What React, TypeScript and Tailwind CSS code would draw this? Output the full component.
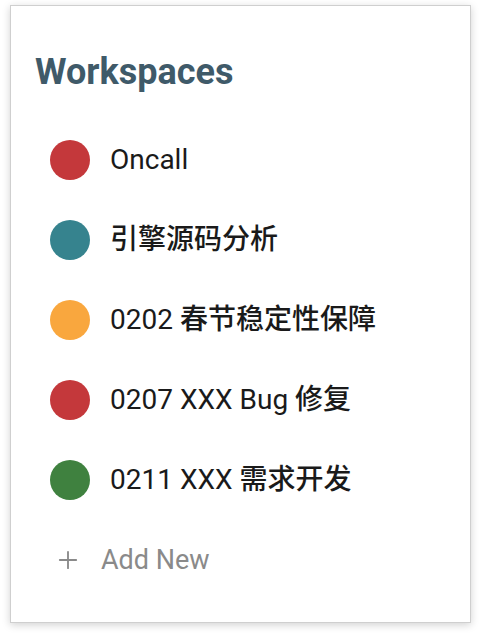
import { Plus } from 'lucide-react';

const workspaces = [
    { name: 'Oncall', color: 'bg-[#c4383b]' },
    { name: '引擎源码分析', color: 'bg-[#36838e]' },
    { name: '0202 春节稳定性保障', color: 'bg-[#f9a73e]' },
    { name: '0207 XXX Bug 修复', color: 'bg-[#c4383b]' },
    { name: '0211 XXX 需求开发', color: 'bg-[#3f813f]' },
];

// CJK glyphs render heavier than the latin ones in the original
function Label({ text }: { text: string }) {
    const parts = text.split(/([\u4e00-\u9fff]+)/).filter(Boolean);
    return (
        <>
            {parts.map((p, i) =>
                /[\u4e00-\u9fff]/.test(p) ? (
                    <span key={i} className="font-medium">{p}</span>
                ) : (
                    <span key={i}>{p}</span>
                )
            )}
        </>
    );
}

export default function App() {
    return (
        <div className="w-[480px] h-[636px] bg-white pt-[5px] pl-[10px]" style={{ fontFamily: 'Roboto, "Noto Sans CJK SC", sans-serif' }}>
            <div className="w-[461px] h-[618px] bg-white border border-[#cfcfcf] shadow-[0_2px_8px_rgba(0,0,0,0.18)]">
                <h1 className="pl-[24px] pt-[46px] text-[36px] leading-[40px] font-bold text-[#3f5a69]">Workspaces</h1>
                <ul className="mt-[28px] flex flex-col">
                    {workspaces.map((w) => (
                        <li key={w.name} className="flex items-center h-[80px] pl-[39px]">
                            <span className={`w-[40px] h-[40px] rounded-full ${w.color}`} />
                            <span className="ml-[20px] text-[28px] leading-[36px] text-[#1a1a1a]">
                                <Label text={w.name} />
                            </span>
                        </li>
                    ))}
                    <li className="flex items-center h-[80px] pl-[43px]">
                        <Plus size={28} strokeWidth={1.6} className="text-[#8a8a8a]" />
                        <span className="ml-[19px] text-[27px] leading-[36px] text-[#8a8a8a]">Add New</span>
                    </li>
                </ul>
            </div>
        </div>
    );
}
